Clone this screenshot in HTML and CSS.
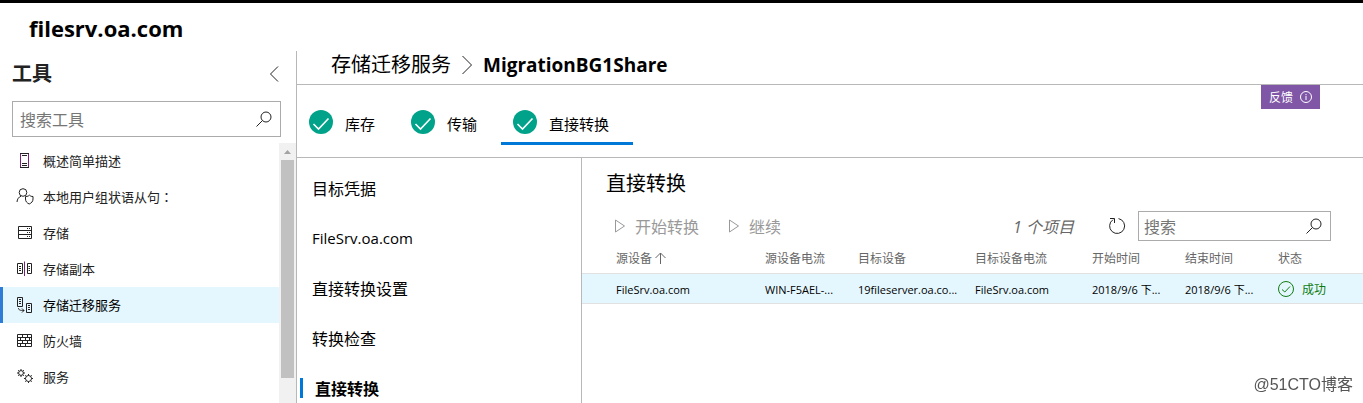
FILE: index.html
```html
<!DOCTYPE html>
<html lang="zh-CN">
<head>
  <meta charset="UTF-8" />
  <meta name="viewport" content="width=device-width, initial-scale=1.0"/>
  <title>filesrv.oa.com</title>
  <link rel="stylesheet" href="styles.css">
</head>
<body>
  <header class="server-bar">
    <h1>filesrv.oa.com</h1>
  </header>

  <div class="layout">
    <aside class="tools">
      <div class="tools-head">
        <h2>工具</h2>
        <button class="collapse" aria-label="折叠">
          <svg width="10" height="18" viewBox="0 0 10 18"><path d="M9 1.5L1.5 9L9 16.5"/></svg>
        </button>
      </div>

      <div class="search tools-search">
        <input type="text" placeholder="搜索工具" aria-label="搜索工具">
        <svg width="16" height="16" viewBox="0 0 16 16"><circle cx="10" cy="6" r="5"/><path d="M6.5 9.5L0.5 15.5"/></svg>
      </div>

      <div class="tools-scroll">
        <nav class="tools-list">
          <a href="#">
            <svg width="18" height="18" viewBox="0 0 18 18"><path class="edge" d="M4.5 2.5V16.5M12.5 2.5V16.5"/><path d="M4 2.5H13M4 16.5H13M6 4.5H11M6 12.5H11M6 14.5H11"/></svg>
            概述简单描述
          </a>
          <a href="#">
            <svg width="18" height="18" viewBox="0 0 18 18"><circle cx="7" cy="5.5" r="3.8"/><path d="M1 15C1.2 12 2.8 10 5 9.2M9.5 9.5C12 9.5 12.5 8.8 13.5 8.2C14.5 9.2 15.5 9.5 17 9.5V12C17 14.5 15.5 16 13.2 17C11 16 9.5 14.5 9.5 12Z"/></svg>
            <span>本地用户组状语从句<span class="colon" lang="zh-TW">：</span></span>
          </a>
          <a href="#">
            <svg width="18" height="18" viewBox="0 0 18 18"><path d="M2.5 3.5H15.5V15.5H2.5ZM2 7.5H16M2 11.5H16"/><path d="M11 5.5H12M13 5.5H14M11 9.5H12M13 9.5H14M11 13.5H12M13 13.5H14"/></svg>
            存储
          </a>
          <a href="#">
            <svg width="18" height="18" viewBox="0 0 18 18"><path d="M6.5 4.5H1.5V14.5H6.5ZM11.5 4.5H15.5V14.5H11.5ZM3 7.5H5M3 9.5H5M3 11.5H5M12.5 7.5H14M12.5 9.5H14M12.5 11.5H14"/><path class="edge" d="M8.5 2.5V17"/></svg>
            存储副本
          </a>
          <a href="#" class="selected">
            <svg width="18" height="18" viewBox="0 0 18 18"><path d="M1.5 2.5H6.5V11.5H1.5ZM10.5 8.5H15.5V17.5H10.5ZM3 4.5H5M3 6.5H5M3 8.5H5M12 10.5H14M12 12.5H14M12 14.5H14M2.5 13C2.5 15 4 15.5 8 15.5M6 13.5L8 15.5L6 17.5"/></svg>
            存储迁移服务
          </a>
          <a href="#">
            <svg width="18" height="18" viewBox="0 0 18 18"><path d="M1.5 3.5H15.5V15.5H1.5ZM1 6.5H16M1 9.5H16M1 12.5H16M6.5 3.5V6.5M11.5 3.5V6.5M4.5 6.5V9.5M9.5 6.5V9.5M13.5 6.5V9.5M6.5 9.5V12.5M11.5 9.5V12.5M4.5 12.5V15.5M9.5 12.5V15.5"/></svg>
            防火墙
          </a>
          <a href="#">
            <svg width="18" height="18" viewBox="0 0 18 18"><circle cx="5" cy="6" r="2.4"/><path d="M5 2V3.5M5 8.5V10M1 6H2.5M7.5 6H9M2.2 3.2L3.2 4.2M7.8 3.2L6.8 4.2M2.2 8.8L3.2 7.8M7.8 8.8L6.8 7.8"/><circle cx="12.5" cy="11.5" r="3"/><path d="M12.5 7V8.5M12.5 14.5V16M8 11.5H9.5M15.5 11.5H17M9.3 8.3L10.4 9.4M15.7 8.3L14.6 9.4M9.3 14.7L10.4 13.6M15.7 14.7L14.6 13.6"/></svg>
            服务
          </a>
        </nav>
        <div class="scrollbar">
          <svg width="17" height="17" viewBox="0 0 17 17"><path d="M5 11L8.5 7L12 11Z"/></svg>
          <div class="thumb"></div>
        </div>
      </div>
    </aside>

    <main class="page">
      <div class="breadcrumb">
        <a href="#">存储迁移服务</a>
        <svg width="12" height="20" viewBox="0 0 12 20"><path d="M1.5 1L10.5 10L1.5 19"/></svg>
        <strong>MigrationBG1Share</strong>
      </div>

      <div class="steps">
        <button class="step">
          <svg width="24" height="24" viewBox="0 0 24 24"><circle cx="12" cy="12" r="12"/><path d="M4.5 14L9.5 19L19.5 8.5"/></svg>
          <span>库存</span>
        </button>
        <button class="step">
          <svg width="24" height="24" viewBox="0 0 24 24"><circle cx="12" cy="12" r="12"/><path d="M4.5 14L9.5 19L19.5 8.5"/></svg>
          <span>传输</span>
        </button>
        <button class="step active">
          <svg width="24" height="24" viewBox="0 0 24 24"><circle cx="12" cy="12" r="12"/><path d="M4.5 14L9.5 19L19.5 8.5"/></svg>
          <span>直接转换</span>
        </button>
        <button class="feedback">
          反馈
          <svg width="12" height="12" viewBox="0 0 12 12"><circle cx="6" cy="6" r="5.5"/><path d="M6 3V4.2M6 5V9"/></svg>
        </button>
      </div>

      <div class="body">
        <nav class="subnav">
          <a href="#">目标凭据</a>
          <a href="#" class="host">FileSrv.oa.com</a>
          <a href="#">直接转换设置</a>
          <a href="#">转换检查</a>
          <a href="#" class="current">直接转换</a>
        </nav>

        <section class="content">
          <h3>直接转换</h3>

          <div class="toolbar">
            <button class="action" disabled>
              <svg width="10" height="14" viewBox="0 0 10 14"><path d="M0.5 1V13L9.5 7Z"/></svg>
              开始转换
            </button>
            <button class="action" disabled>
              <svg width="10" height="14" viewBox="0 0 10 14"><path d="M0.5 1V13L9.5 7Z"/></svg>
              继续
            </button>
            <span class="count">1 个项目</span>
            <button class="refresh" aria-label="刷新">
              <svg width="18" height="18" viewBox="0 0 18 18"><path d="M10.5 1.6A7.5 7.5 0 1 1 5 2.7M2 1.5L6.5 1.5L6.5 6"/></svg>
            </button>
            <div class="search">
              <input type="text" placeholder="搜索" aria-label="搜索">
              <svg width="16" height="16" viewBox="0 0 16 16"><circle cx="10" cy="6" r="5"/><path d="M6.5 9.5L0.5 15.5"/></svg>
            </div>
          </div>

          <table>
            <colgroup>
              <col class="c-source">
              <col class="c-short">
              <col class="c-long">
              <col class="c-long">
              <col class="c-short">
              <col class="c-short">
              <col>
            </colgroup>
            <thead>
              <tr>
                <th>源设备 <svg width="11" height="12" viewBox="0 0 11 12"><path d="M5.5 12V1M0.5 6L5.5 1L10.5 6"/></svg></th>
                <th>源设备电流</th>
                <th>目标设备</th>
                <th>目标设备电流</th>
                <th>开始时间</th>
                <th>结束时间</th>
                <th>状态</th>
              </tr>
            </thead>
            <tbody>
              <tr>
                <td>FileSrv.oa.com</td>
                <td>WIN-F5AEL-...</td>
                <td>19fileserver.oa.co...</td>
                <td>FileSrv.oa.com</td>
                <td>2018/9/6 下...</td>
                <td>2018/9/6 下...</td>
                <td>
                  <span class="status">
                    <svg width="16" height="16" viewBox="0 0 16 16"><circle cx="8" cy="8" r="7.5"/><path d="M4 8.5L6.8 11L12 5.5"/></svg>
                    成功
                  </span>
                </td>
              </tr>
            </tbody>
          </table>
        </section>
      </div>
    </main>
  </div>

  <div class="watermark">@51CTO博客</div>
</body>
</html>
```
FILE: styles.css
```css
* {
  box-sizing: border-box;
}

body {
  margin: 0;
  height: 100vh;
  display: flex;
  flex-direction: column;
  overflow: hidden;
  font-family: "Open Sans", "Noto Sans CJK SC", sans-serif;
  font-size: 16px;
  color: #000;
  background: #fff;
}

h1, h2, h3 {
  margin: 0;
}

a {
  color: inherit;
  text-decoration: none;
}

button {
  padding: 0;
  border: none;
  background: none;
  font-family: inherit;
  color: inherit;
}

svg {
  flex: none;
  fill: none;
  stroke: #222;
}

.server-bar {
  flex: none;
  border-top: 3px solid #000;
  padding: 11px 29px 9px;
}

.server-bar h1 {
  font-size: 22px;
  line-height: 28px;
}

.layout {
  flex: 1;
  min-height: 0;
  display: flex;
}

/* left tools panel */
.tools {
  flex: none;
  width: 297px;
  display: flex;
  flex-direction: column;
  border-right: 1px solid #b8b8b8;
}

.tools-head {
  display: flex;
  align-items: center;
  justify-content: space-between;
  height: 46px;
  padding: 0 17px 0 12px;
}

.tools-head h2 {
  font-size: 20px;
  line-height: 28px;
  color: #222;
}

.collapse {
  height: 18px;
}

.search {
  display: flex;
  align-items: center;
  width: 193px;
  height: 30px;
  padding: 0 8px 0 5px;
  border: 1px solid #ababab;
}

.search input {
  flex: 1;
  min-width: 0;
  padding: 2px 0 0;
  border: none;
  outline: none;
  background: none;
  font-family: inherit;
  font-size: 16px;
}

.search input::placeholder {
  color: #767676;
}

.tools-search {
  flex: none;
  width: auto;
  height: 36px;
  margin: 4px 15px 6px 12px;
  padding-left: 7px;
}

.tools-scroll {
  flex: 1;
  min-height: 0;
  display: flex;
}

.tools-list {
  flex: 1;
  overflow: hidden;
}

.tools-list a {
  display: flex;
  align-items: center;
  gap: 9px;
  height: 36px;
  padding: 0 0 2px 13px;
  border-left: 3px solid transparent;
  font-size: 13px;
  color: #222;
}

.tools-list .edge {
  stroke: #7a1f7a;
}

.tools-list .selected {
  border-left-color: #2e7cd6;
  background: #e5f7fe;
  color: #000;
}

.colon {
  font-family: "Noto Sans CJK TC", sans-serif;
  text-spacing-trim: space-all;
}

.scrollbar {
  width: 17px;
  background: #f1f1f1;
}

.scrollbar svg {
  display: block;
  fill: #a3a3a3;
  stroke: none;
}

.thumb {
  height: 84%;
  margin: 0 2px;
  background: #c1c1c1;
}

/* main area */
.page {
  flex: 1;
  min-width: 0;
  display: flex;
  flex-direction: column;
}

.breadcrumb {
  flex: none;
  display: flex;
  align-items: center;
  gap: 10px;
  height: 34px;
  padding: 0 34px 6px;
  border-bottom: 1px solid #b8b8b8;
  font-size: 20px;
  line-height: 28px;
}

.breadcrumb strong {
  font-size: 19px;
}

.steps {
  flex: none;
  display: flex;
  align-items: flex-start;
  height: 73px;
  border-bottom: 1px solid #b8b8b8;
}

.step {
  display: flex;
  align-items: center;
  gap: 12px;
  height: 60px;
  padding: 17px 24px 0 12px;
  border-bottom: 3px solid transparent;
  font-size: 15px;
}

.step span {
  padding-top: 2px;
}

.step circle {
  fill: #00a28a;
  stroke: none;
}

.step path {
  stroke: #fff;
  stroke-width: 1.6;
}

.active {
  border-bottom-color: #0078d7;
}

.feedback {
  display: flex;
  align-items: center;
  gap: 7px;
  height: 24px;
  margin-left: auto;
  margin-right: 43px;
  padding: 0 8px;
  background: #8057a6;
  color: #fff;
  font-size: 12px;
}

.feedback svg {
  stroke: #fff;
}

.body {
  flex: 1;
  min-height: 0;
  display: flex;
}

.subnav {
  flex: none;
  width: 285px;
  padding-top: 5px;
  border-right: 1px solid #b8b8b8;
}

.subnav a {
  display: flex;
  align-items: center;
  height: 50px;
  padding-left: 15px;
}

.subnav .host {
  font-size: 15px;
}

.subnav .current {
  padding-left: 3px;
  font-weight: bold;
}

.current::before {
  content: "";
  width: 3px;
  height: 20px;
  margin-right: 12px;
  background: #0078d7;
}

.content {
  flex: 1;
  min-width: 0;
  padding-top: 11px;
}

.content h3 {
  padding-left: 24px;
  font-size: 20px;
  line-height: 30px;
  font-weight: normal;
}

.toolbar {
  display: flex;
  align-items: center;
  margin-top: 12px;
  padding: 0 32px 0 33px;
}

.action {
  display: flex;
  align-items: center;
  gap: 10px;
  margin-right: 30px;
  font-size: 16px;
  color: #999;
}

.action svg {
  stroke: #999;
}

.count {
  margin-left: auto;
  font-style: italic;
  color: #666;
}

.refresh {
  height: 18px;
  margin: 0 12px 0 34px;
}

table {
  width: 100%;
  margin-top: 2px;
  table-layout: fixed;
  border-collapse: collapse;
  font-size: 12px;
}

.c-source {
  width: 173px;
}

.c-short {
  width: 93px;
}

.c-long {
  width: 117px;
}

th, td {
  height: 30px;
  padding: 0 0 0 10px;
  border-bottom: 1px solid #e1e1e1;
  text-align: left;
  white-space: nowrap;
}

th:first-child, td:first-child {
  padding-left: 34px;
}

th {
  font-weight: normal;
  color: #666;
}

th svg {
  stroke: #666;
  vertical-align: -1px;
}

td {
  padding-top: 2px;
  font-size: 11px;
}

tbody tr {
  background: #e5f7fe;
}

.status {
  display: flex;
  align-items: center;
  gap: 8px;
  font-size: 12px;
  color: #107c10;
}

.status svg {
  stroke: #107c10;
}

.watermark {
  position: fixed;
  right: 10px;
  bottom: 8px;
  font-family: "Liberation Sans", "Noto Sans CJK SC", sans-serif;
  font-size: 16px;
  line-height: 20px;
  color: #555;
}
```
